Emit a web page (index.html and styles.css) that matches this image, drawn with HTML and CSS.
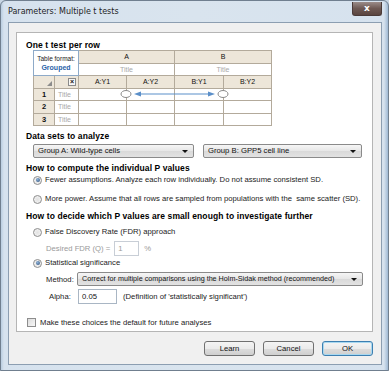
FILE: index.html
```html
<!DOCTYPE html>
<html>
<head>
    <meta charset="utf-8">
    <title>Parameters: Multiple t tests</title>
    <link rel="stylesheet" href="styles.css">
</head>
<body>
<div class="window">
    <div class="titlebar">
        <span class="title">Parameters: Multiple t tests</span>
        <span class="close">x</span>
    </div>
    <div class="client">
        <div class="panel">
            <div class="heading">One t test per row</div>
            <div class="sheet-wrap">
                <table class="sheet">
                    <colgroup>
                        <col style="width:21px"><col style="width:24px">
                        <col style="width:48px"><col style="width:48px">
                        <col style="width:49px"><col style="width:48px">
                    </colgroup>
                    <tr class="r13">
                        <td class="fmt" colspan="2" rowspan="2">Table format:<br><b>Grouped</b></td>
                        <td class="hd" colspan="2">A</td>
                        <td class="hd" colspan="2">B</td>
                    </tr>
                    <tr class="r12">
                        <td class="ttl" colspan="2">Title</td>
                        <td class="ttl" colspan="2">Title</td>
                    </tr>
                    <tr class="r13">
                        <td class="hd corner"><span class="tri"></span></td>
                        <td class="hd xcell"><span class="xbox">×</span></td>
                        <td class="hd">A:Y1</td>
                        <td class="hd">A:Y2</td>
                        <td class="hd">B:Y1</td>
                        <td class="hd">B:Y2</td>
                    </tr>
                    <tr class="r12">
                        <td class="hd num">1</td><td class="rowttl">Title</td>
                        <td></td><td></td><td></td><td></td>
                    </tr>
                    <tr class="r13">
                        <td class="hd num">2</td><td class="rowttl">Title</td>
                        <td></td><td></td><td></td><td></td>
                    </tr>
                    <tr class="r12">
                        <td class="hd num">3</td><td class="rowttl">Title</td>
                        <td></td><td></td><td></td><td></td>
                    </tr>
                </table>
                <!-- link between the two compared columns -->
                <svg class="link" width="238" height="75" viewBox="0 0 238 75">
                    <ellipse cx="93" cy="44" rx="5" ry="3.5" fill="#fff" stroke="#8a8a8a" stroke-width="1"/>
                    <ellipse cx="190" cy="44" rx="5" ry="3.5" fill="#fff" stroke="#8a8a8a" stroke-width="1"/>
                    <line x1="106" y1="44" x2="177" y2="44" stroke="#5b8fc9" stroke-width="1.2"/>
                    <polygon points="101,44 108,41.5 108,46.5" fill="#5b8fc9"/>
                    <polygon points="182,44 175,41.5 175,46.5" fill="#5b8fc9"/>
                </svg>
            </div>

            <div class="heading h-data">Data sets to analyze</div>
            <div class="combos">
                <div class="combo">Group A: Wild-type cells<span class="arrow"></span></div>
                <div class="combo">Group B: GPP5 cell line<span class="arrow"></span></div>
            </div>

            <div class="heading h-compute">How to compute the individual P values</div>
            <div class="opt opt-first"><span class="radio on"></span>Fewer assumptions. Analyze each row individually. Do not assume consistent SD.</div>
            <div class="opt opt-second"><span class="radio"></span>More power. Assume that all rows are sampled from populations with the&nbsp; same scatter (SD).</div>

            <div class="heading h-decide">How to decide which P values are small enough to investigate further</div>
            <div class="opt opt-fdr"><span class="radio"></span>False Discovery Rate (FDR) approach</div>
            <div class="fdr-row">Desired FDR (Q) = <span class="field disabled">1</span> %</div>
            <div class="opt opt-sig"><span class="radio on"></span>Statistical significance</div>
            <div class="method-row">
                <span class="lbl">Method:</span>
                <div class="combo wide">Correct for multiple comparisons using the Holm-Sidak method (recommended)<span class="arrow"></span></div>
            </div>
            <div class="alpha-row">
                <span class="lbl lbl-alpha">Alpha:</span>
                <span class="field alpha">0.05</span>
                <span class="note">(Definition of 'statistically significant')</span>
            </div>
            <div class="default-row"><span class="check"></span>Make these choices the default for future analyses</div>
        </div>
        <div class="buttons">
            <span class="btn">Learn</span>
            <span class="btn">Cancel</span>
            <span class="btn default">OK</span>
        </div>
    </div>
</div>
</body>
</html>
```

FILE: styles.css
```css
html, body {
    margin: 0;
    padding: 0;
    background: #c8d6e4;
}
body {
    font-family: "Liberation Sans", Arial, sans-serif;
    font-size: 7.7px;
    color: #1a1a1a;
    white-space: nowrap;
}

/* ---- window frame ---- */
.window {
    width: 389px;
    height: 371px;
    box-sizing: border-box;
    padding: 0 6px 5px 7px;
    display: flex;
    flex-direction: column;
    background: linear-gradient(90deg, #b9cde0 0, #d6e2ee 3px, #d9e4ee 50%, #d6e2ee calc(100% - 4px), #9fb9d4 100%);
    border: 1px solid #707f8f;
    border-radius: 6px 6px 0 0;
}
.titlebar {
    height: 21px;
    display: flex;
    align-items: center;
    justify-content: space-between;
    flex: none;
}
.title {
    font-family: "DejaVu Sans", sans-serif;
    font-size: 8px;
    color: #1e1e1e;
    margin-top: -1px;
}
.close {
    width: 28px;
    height: 13px;
    margin-top: -6px;
    border: 1px solid #4a3a38;
    border-top: none;
    border-radius: 0 0 3px 3px;
    background: linear-gradient(#9b8c89, #6e5954 50%, #5a4540);
    color: #fff;
    font-family: "DejaVu Sans", sans-serif;
    font-weight: bold;
    font-size: 9px;
    line-height: 12px;
    text-align: center;
}
.client {
    flex: 1;
    background: #f0f0f0;
    border: 1px solid #8c9eb1;
    padding: 9px 8px 0 7px;
    display: flex;
    flex-direction: column;
}

/* ---- white panel ---- */
.panel {
    height: 300px;
    box-sizing: border-box;
    background: #fff;
    border: 1px solid #b5b5b5;
    padding: 7px 0 0 9px;
}
.heading {
    font-weight: bold;
    font-size: 8.5px;
    line-height: 10px;
    height: 10px;
    letter-spacing: 0.1px;
    color: #000;
}

/* ---- sheet preview ---- */
.sheet-wrap {
    position: relative;
    width: 238px;
    margin-left: 7px;
}
.sheet {
    border-collapse: collapse;
    table-layout: fixed;
    width: 238px;
    font-size: 7px;
    text-align: center;
}
.sheet td {
    border: 1px solid #b3aa9b;
    padding: 0;
    line-height: 10px;
    overflow: hidden;
}
.sheet tr.r13 { height: 13px; }
.sheet tr.r12 { height: 12px; }
.sheet .hd {
    background: #ede6d9;
    color: #111;
}
.sheet .fmt {
    background: #fff;
    border: 1px solid #8eaac8;
    font-size: 6.5px;
    line-height: 9px;
    color: #222;
}
.sheet .fmt b {
    color: #2a63a8;
    font-size: 7px;
}
.sheet .ttl,
.sheet .rowttl {
    color: #a9a9a9;
    background: #fff;
}
.sheet .rowttl {
    text-align: left;
    padding-left: 3px;
}
.sheet .num {
    font-weight: bold;
    font-size: 7.5px;
}
.corner {
    position: relative;
}
.tri {
    position: absolute;
    right: 2px;
    bottom: 2px;
    width: 0;
    height: 0;
    border-left: 5px solid transparent;
    border-bottom: 5px solid #8c8c8c;
}
.xcell {
    text-align: right !important;
}
.xbox {
    display: inline-block;
    width: 6px;
    height: 6px;
    margin-right: 2px;
    border: 1px solid #8a8a8a;
    background: #f7f7f7;
    font-size: 7px;
    line-height: 6px;
    font-weight: bold;
    text-align: center;
    vertical-align: middle;
}
.link {
    position: absolute;
    left: 0;
    top: 0;
    pointer-events: none;
}

/* ---- combos ---- */
.h-data { margin-top: 5px; }
.combos {
    display: flex;
    gap: 9px;
    margin: 3px 0 0 7px;
}
.combo {
    position: relative;
    width: 161px;
    height: 14px;
    box-sizing: border-box;
    border: 1px solid #8a8a8a;
    border-radius: 2px;
    background: linear-gradient(#f6f6f6, #e6e6e6 50%, #d9d9d9 51%, #e2e2e2);
    line-height: 12px;
    padding-left: 4px;
    color: #111;
    overflow: hidden;
}
.combos .combo:last-child { width: 159px; }
.arrow {
    position: absolute;
    right: 5px;
    top: 5px;
    border-left: 3px solid transparent;
    border-right: 3px solid transparent;
    border-top: 3px solid #111;
}

/* ---- options ---- */
.h-compute { margin-top: 5px; }
.opt {
    height: 10px;
    line-height: 10px;
    display: flex;
    align-items: center;
    margin-left: 7px;
    color: #222;
}
.opt-first { margin-top: 2px; }
.opt-second { margin-top: 9px; }
.h-decide { margin-top: 7px; }
.opt-fdr { margin-top: 6px; }
.radio {
    width: 7px;
    height: 7px;
    border: 1px solid #8d8d8d;
    border-radius: 50%;
    background: radial-gradient(circle, #e2e2e2 0, #f6f6f6 100%);
    margin-right: 3px;
    flex: none;
    position: relative;
}
.radio.on::after {
    content: "";
    position: absolute;
    left: 1.5px;
    top: 1.5px;
    width: 4px;
    height: 4px;
    border-radius: 50%;
    background: radial-gradient(circle at 40% 35%, #8fb2d8, #2b4f7a);
}
.fdr-row {
    margin: 4px 0 0 20px;
    height: 15px;
    display: flex;
    align-items: center;
    color: #9a9a9a;
}
.field {
    display: inline-block;
    box-sizing: border-box;
    height: 15px;
    border: 1px solid #a9b6c4;
    background: #fff;
    line-height: 13px;
    padding-left: 3px;
    color: #111;
}
.field.disabled {
    width: 25px;
    margin: 0 5px 0 4px;
    border-color: #c8ced6;
    color: #9a9a9a;
}
.opt-sig { margin-top: 2px; }
.method-row {
    display: flex;
    align-items: center;
    margin: 4px 0 0 20px;
    height: 14px;
    color: #222;
}
.method-row .lbl { width: 31px; flex: none; }
.combo.wide {
    width: 286px;
    height: 14px;
    font-size: 7.2px;
}
.alpha-row {
    display: flex;
    align-items: center;
    margin: 3px 0 0 20px;
    height: 15px;
    color: #222;
}
.lbl-alpha {
    width: 32px;
    padding-left: 3px;
    box-sizing: border-box;
}
.field.alpha {
    width: 39px;
    margin-right: 6px;
}
.default-row {
    display: flex;
    align-items: center;
    margin: 13px 0 0 1px;
    height: 10px;
    color: #222;
}
.check {
    width: 7px;
    height: 7px;
    border: 1px solid #8d8d8d;
    background: linear-gradient(135deg, #dcdcdc, #f8f8f8);
    margin-right: 4px;
}

/* ---- buttons ---- */
.buttons {
    display: flex;
    justify-content: flex-end;
    gap: 8px;
    margin-top: 9px;
}
.btn {
    width: 51px;
    height: 15px;
    box-sizing: border-box;
    border: 1px solid #707070;
    border-radius: 3px;
    background: linear-gradient(#f4f4f4, #ebebeb 50%, #dddddd 51%, #cfcfcf);
    text-align: center;
    line-height: 13px;
    color: #111;
}
.btn.default {
    border-color: #3c7fb1;
    box-shadow: inset 0 0 0 1px #a8d8f0;
}
```
